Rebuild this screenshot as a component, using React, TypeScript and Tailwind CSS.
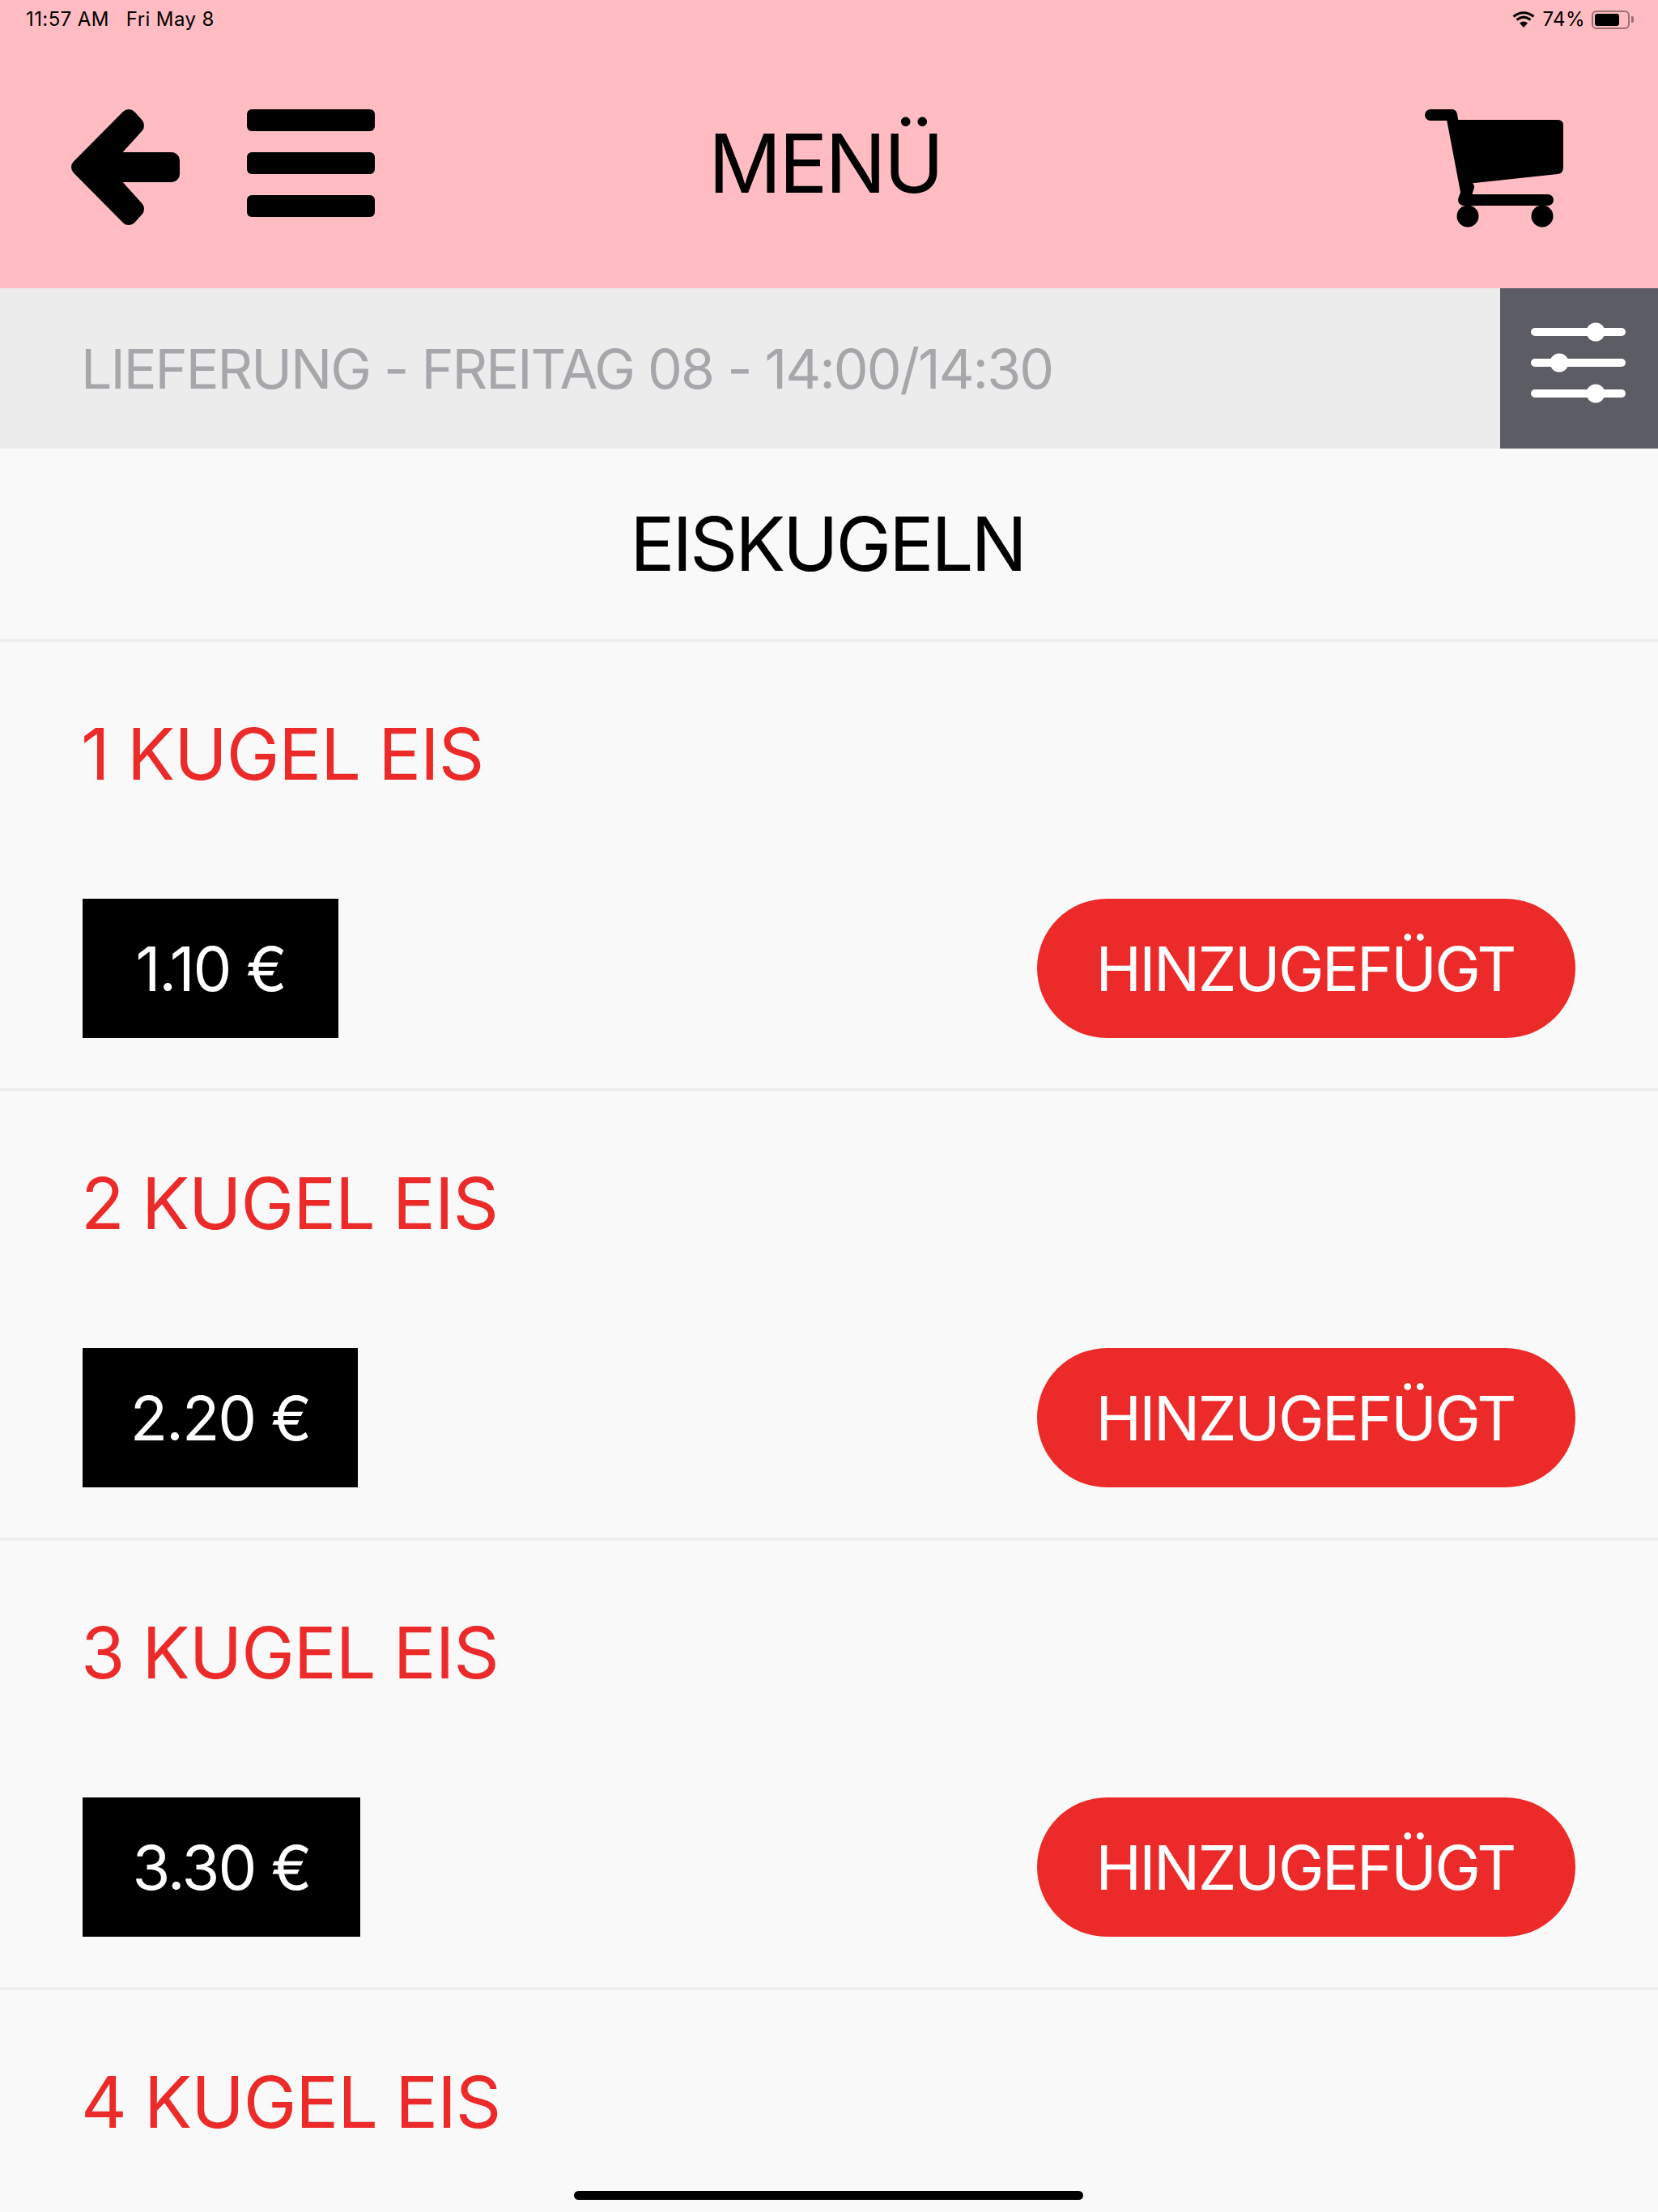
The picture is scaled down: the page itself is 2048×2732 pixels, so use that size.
import React from 'react';

const items = [
  { name: '1 KUGEL EIS', price: '1.10 €', priceWidth: 'w-[316px]' },
  { name: '2 KUGEL EIS', price: '2.20 €', priceWidth: 'w-[340px]' },
  { name: '3 KUGEL EIS', price: '3.30 €', priceWidth: 'w-[343px]' },
  { name: '4 KUGEL EIS' },
];

const BackIcon = () => (
  <svg width="136" height="144" viewBox="0 0 136 144" className="block">
    <path
      d="M10 71.5 L71 10 L80 20 L41 63 H124 V80 H41 L80 123 L71 133 Z"
      fill="#000"
      stroke="#000"
      strokeWidth="20"
      strokeLinejoin="round"
    />
  </svg>
);

const MenuIcon = () => (
  <div className="flex w-[158px] flex-col gap-[26px]">
    <div className="h-[27px] rounded-[6px] bg-black" />
    <div className="h-[27px] rounded-[6px] bg-black" />
    <div className="h-[27px] rounded-[6px] bg-black" />
  </div>
);

const CartIcon = () => (
  <svg width="172" height="146" viewBox="0 0 172 146" className="block">
    <path d="M7 7 H33 L53 112" fill="none" stroke="#000" strokeWidth="14" strokeLinecap="round" strokeLinejoin="round" />
    <path d="M38 13 H164 Q171 13 171 20 V72 Q171 79 164 80 L52 92 Z" fill="#000" />
    <path d="M54 96 L48 112 H152" fill="none" stroke="#000" strokeWidth="14" strokeLinecap="round" strokeLinejoin="round" />
    <circle cx="53" cy="132" r="13.5" fill="#000" />
    <circle cx="145" cy="132" r="13.5" fill="#000" />
  </svg>
);

const SliderIcon = () => (
  <svg width="118" height="114" viewBox="0 0 118 114" className="block">
    <g fill="#fff">
      <rect x="0" y="14" width="117" height="10" rx="5" />
      <rect x="0" y="52" width="117" height="10" rx="5" />
      <rect x="0" y="90" width="117" height="10" rx="5" />
      <circle cx="80" cy="19" r="11.5" />
      <circle cx="35" cy="57" r="11.5" />
      <circle cx="80" cy="95" r="11.5" />
    </g>
  </svg>
);

const WifiIcon = () => (
  <svg width="28" height="20" viewBox="0 0 28 20" className="block">
    <path d="M14 20 L9 14.5 Q14 10.5 19 14.5 Z" fill="#000" />
    <path d="M5.5 10.5 Q14 3.8 22.5 10.5" fill="none" stroke="#000" strokeWidth="3" />
    <path d="M1.5 6.5 Q14 -3 26.5 6.5" fill="none" stroke="#000" strokeWidth="3" />
  </svg>
);

const Battery = () => (
  <div className="flex items-center gap-[2px]">
    <div className="h-[23px] w-[47px] rounded-[6px] border-2 border-black/40 p-[2px]">
      <div className="h-full w-[30px] rounded-[3px] bg-black" />
    </div>
    <div className="h-[8px] w-[3px] rounded-r-[2px] bg-black/40" />
  </div>
);

const App = () => {
  return (
    <div className="relative h-[2732px] w-[2048px] overflow-hidden bg-[#f9f9f9] font-['Inter',sans-serif]">
      <header className="h-[356px] bg-[#ffbcc2] text-black">
        <div className="flex h-[48px] items-center justify-between pl-[32px] pr-[30px] text-[24px] tracking-[0.4px]">
          <div className="flex gap-[21px]">
            <span>11:57 AM</span>
            <span>Fri May 8</span>
          </div>
          <div className="flex items-center gap-[8px]">
            <WifiIcon />
            <span className="ml-[2px]">74%</span>
            <Battery />
          </div>
        </div>
        <div className="flex items-start justify-between pl-[88px] pr-[116px] pt-[87px]">
          <div className="flex w-[393px] items-start gap-[81px]">
            <BackIcon />
            <MenuIcon />
          </div>
          <h1 className="text-[100px] leading-[134px] font-normal tracking-[-3px]">MENÜ</h1>
          <div className="flex w-[375px] justify-end">
            <CartIcon />
          </div>
        </div>
      </header>

      <div className="flex h-[198px]">
        <div className="flex flex-1 items-center bg-[#ececec] pl-[100px] text-[68px] tracking-[-2px] text-[#a6a6ab]">
          LIEFERUNG - FREITAG 08 - 14:00/14:30
        </div>
        <div className="flex w-[195px] items-center justify-center bg-[#5c5c64] pb-[14px] pr-[2px]">
          <SliderIcon />
        </div>
      </div>

      <div className="flex h-[239px] items-center justify-center border-b-4 border-[#eeeeee] pr-[4px] text-[92px] tracking-[-3px] text-black">
        EISKUGELN
      </div>

      {items.map((item) => (
        <section key={item.name} className="h-[555px] border-b-4 border-[#eeeeee] px-[102px] pt-[90px]">
          <h2 className="ml-[-2px] h-[96px] text-[88px] leading-[96px] tracking-[-1px] [word-spacing:-1.5px] text-[#ec2a2a]">
            {item.name}
          </h2>
          {item.price && (
            <div className="mt-[131px] flex items-center justify-between">
              <div className={`flex h-[172px] items-center justify-center bg-black text-[76px] tracking-[-2px] text-white ${item.priceWidth}`}>
                {item.price}
              </div>
              <button className="flex h-[172px] w-[665px] items-center justify-center rounded-full bg-[#ec2a2a] pr-[3px] text-[76px] tracking-[-2.6px] text-white">
                HINZUGEFÜGT
              </button>
            </div>
          )}
        </section>
      ))}

      <div className="absolute bottom-[15px] left-[709px] h-[11px] w-[629px] rounded-full bg-black" />
    </div>
  );
};

export default App;
